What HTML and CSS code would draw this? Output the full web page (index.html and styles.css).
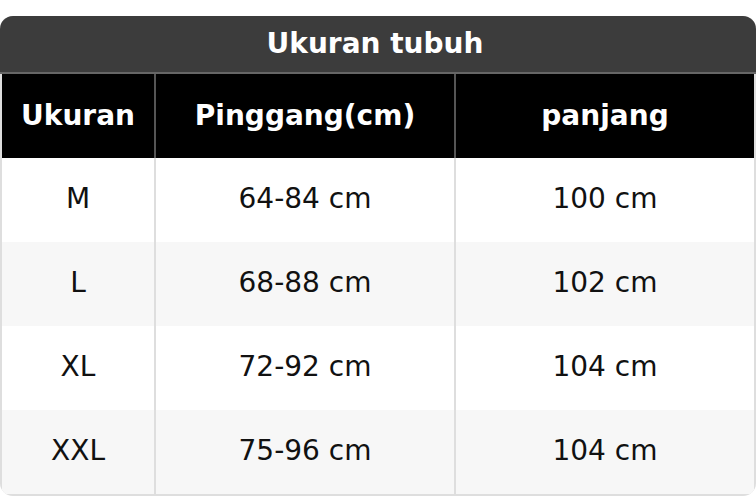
FILE: index.html
```html
<!DOCTYPE html>
<html lang="id">
<head>
<meta charset="utf-8">
<link rel="stylesheet" href="styles.css">
</head>
<body>
<div class="card">
  <div class="title">Ukuran tubuh</div>
  <div class="row head">
    <div class="cell">Ukuran</div>
    <div class="cell">Pinggang(cm)</div>
    <div class="cell">panjang</div>
  </div>
  <div class="row">
    <div class="cell">M</div>
    <div class="cell">64-84 cm</div>
    <div class="cell">100 cm</div>
  </div>
  <div class="row alt">
    <div class="cell">L</div>
    <div class="cell">68-88 cm</div>
    <div class="cell">102 cm</div>
  </div>
  <div class="row">
    <div class="cell">XL</div>
    <div class="cell">72-92 cm</div>
    <div class="cell">104 cm</div>
  </div>
  <div class="row alt">
    <div class="cell">XXL</div>
    <div class="cell">75-96 cm</div>
    <div class="cell">104 cm</div>
  </div>
</div>
</body>
</html>
```
FILE: styles.css
```css
html, body {
  margin: 0;
  padding: 0;
  background: #ffffff;
}
body {
  padding-top: 16px;
  font-family: "DejaVu Sans", sans-serif;
  font-size: 28px;
}
.card {
  width: 756px;
  box-sizing: border-box;
  background: #dedede;
  border-radius: 13px;
  overflow: hidden;
  padding: 0 2px 2px;
}
.title {
  margin: 0 -2px;
  height: 56px;
  box-sizing: border-box;
  padding: 0 6px 1px 0;
  background: #3c3c3c;
  color: #ffffff;
  font-weight: bold;
  display: flex;
  align-items: center;
  justify-content: center;
  border-bottom: 2px solid #666666;
  height: 58px;
}
.row {
  display: grid;
  grid-template-columns: 152px 298px 298px;
  column-gap: 2px;
  height: 84px;
}
.cell {
  display: flex;
  align-items: center;
  justify-content: center;
  padding-bottom: 3px;
  background: #ffffff;
  color: #111111;
}
.row.alt .cell {
  background: #f7f7f7;
}
.row.head {
  background: #555555;
}
.row.head .cell {
  padding-bottom: 2px;
  background: #000000;
  color: #ffffff;
  font-weight: bold;
}
```
